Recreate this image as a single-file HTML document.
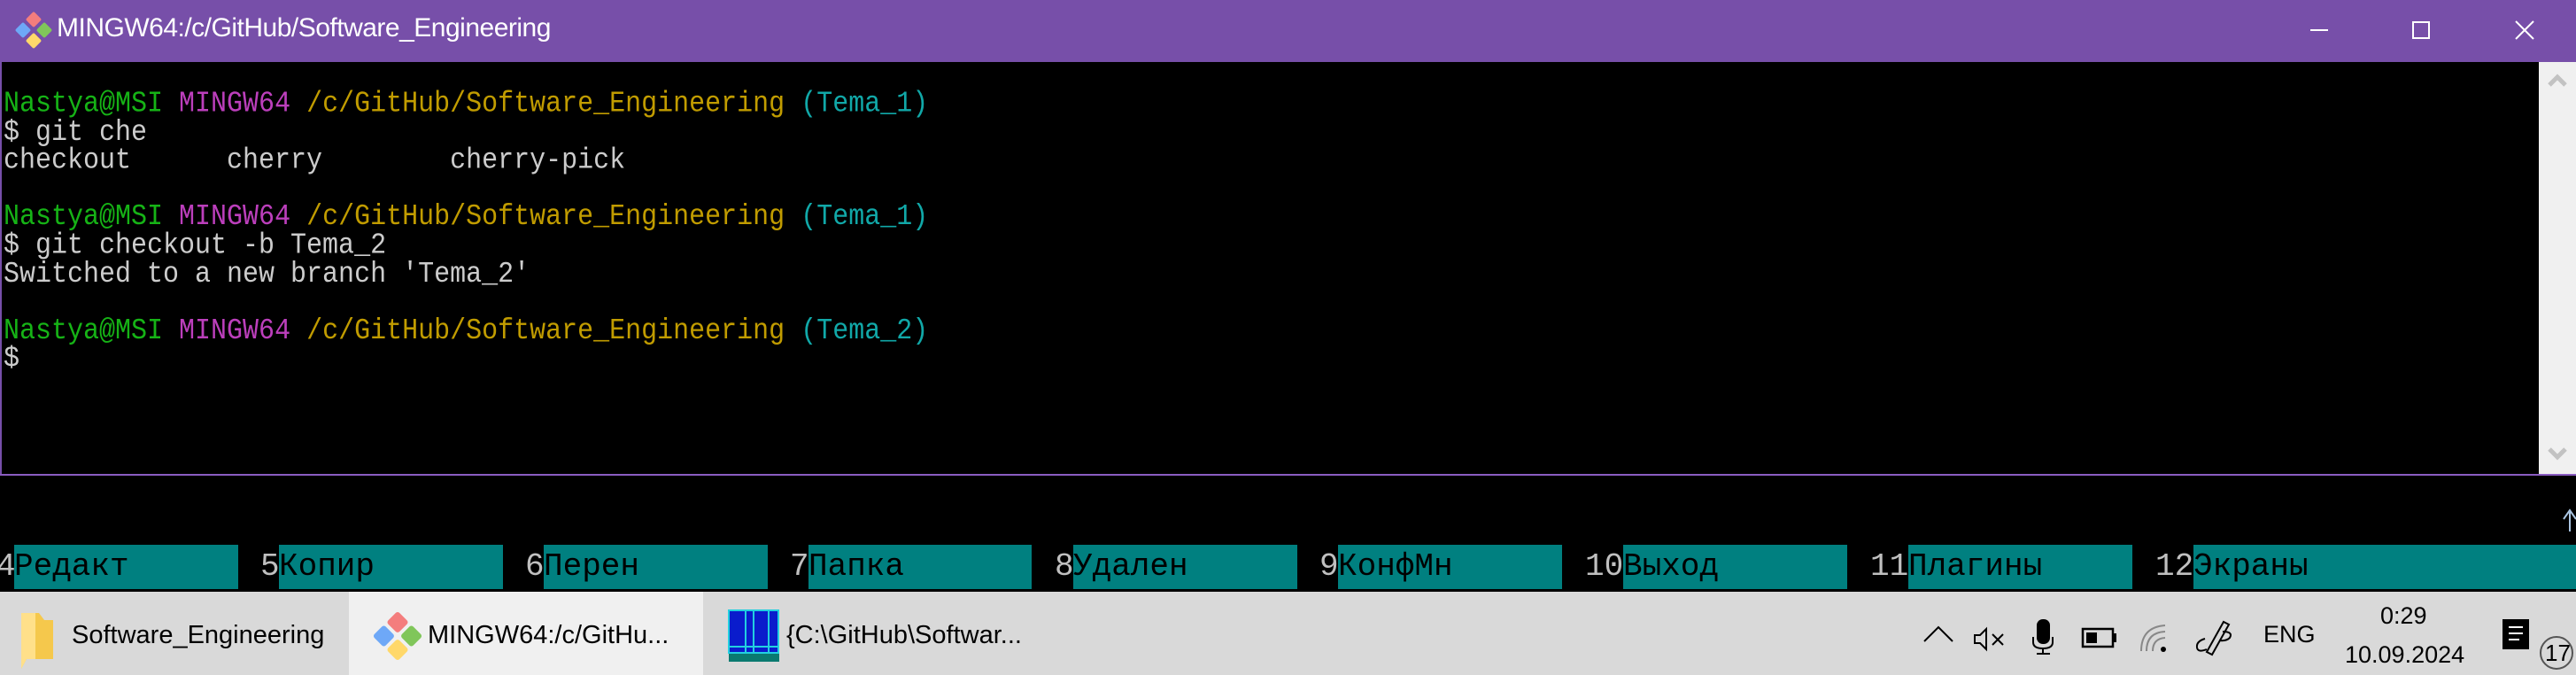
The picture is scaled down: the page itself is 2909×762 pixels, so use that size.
<!DOCTYPE html>
<html><head><meta charset="utf-8"><style>
*{margin:0;padding:0;box-sizing:border-box}
body{width:2909px;height:762px;overflow:hidden;background:#000;position:relative;font-family:"Liberation Sans","DejaVu Sans",sans-serif}
.a{position:absolute;white-space:pre}
#title{left:0;top:0;width:2909px;height:70px;background:#774fa9}
.term{font-family:"Liberation Mono","DejaVu Sans Mono",monospace;font-size:30px;line-height:28.6px;color:#cccccc;transform:scaleY(1.12);transform-origin:0 0}
.g{color:#16b316}.m{color:#bc3fbc}.y{color:#c19c00}.c{color:#11a8a8}
.fk{font-family:"Liberation Mono","DejaVu Sans Mono",monospace;font-size:36px;line-height:50px;top:615px;height:50px}
.num{color:#c0c0c0}
.blk{background:#008080;color:#000;height:50px}
#tb{left:0;top:668px;width:2909px;height:94px;background:#d9d9d9}
.tt{font-size:29px;color:#000;top:701px}
</style></head><body>
<div id="title" class="a"></div>
<div class="a" style="left:0;top:70px;width:2px;height:467px;background:#774fa9"></div>
<div class="a" style="left:0;top:535px;width:2909px;height:2px;background:#8a5cc0"></div>
<svg class="a" style="left:0;top:0" width="2909" height="762">
 <g transform="translate(38,34) rotate(45)">
  <rect x="-15" y="-15" width="13" height="13" rx="2" fill="#f47d7d"/>
  <rect x="2" y="-15" width="13" height="13" rx="2" fill="#80c65a"/>
  <rect x="2" y="2" width="13" height="13" rx="2" fill="#ffd86a"/>
  <rect x="-15" y="2" width="13" height="13" rx="2" fill="#6ea8f7"/>
 </g>
 <line x1="2609" y1="34" x2="2629" y2="34" stroke="#fff" stroke-width="2"/>
 <rect x="2725" y="25" width="18" height="18" fill="none" stroke="#fff" stroke-width="2"/>
 <path d="M2841 24L2861 44M2861 24L2841 44" stroke="#fff" stroke-width="2"/>
 <rect x="2867" y="70" width="42" height="465" fill="#f0f0f0"/>
 <path d="M2879 96L2888 87L2897 96" stroke="#c2c2c2" stroke-width="5" fill="none"/>
 <path d="M2879 507L2888 516L2897 507" stroke="#c2c2c2" stroke-width="5" fill="none"/>
 <path d="M2902 600V578M2895 586L2902 576L2909 586" stroke="#a9c4e0" stroke-width="2" fill="none"/>
</svg>
<div class="a" style="left:64px;top:15px;font-size:30px;color:#fff;letter-spacing:-0.5px">MINGW64:/c/GitHub/Software_Engineering</div>
<div class="a term" style="left:4px;top:102px"><span class="g">Nastya@MSI</span> <span class="m">MINGW64</span> <span class="y">/c/GitHub/Software_Engineering</span> <span class="c">(Tema_1)</span>
$ git che
checkout      cherry        cherry-pick

<span class="g">Nastya@MSI</span> <span class="m">MINGW64</span> <span class="y">/c/GitHub/Software_Engineering</span> <span class="c">(Tema_1)</span>
$ git checkout -b Tema_2
Switched to a new branch 'Tema_2'

<span class="g">Nastya@MSI</span> <span class="m">MINGW64</span> <span class="y">/c/GitHub/Software_Engineering</span> <span class="c">(Tema_2)</span>
$</div>

<div class="a fk num" style="left:-4px">4</div><div class="a fk blk" style="left:16px;width:253px">Редакт</div>
<div class="a fk num" style="left:294px">5</div><div class="a fk blk" style="left:315px;width:253px">Копир</div>
<div class="a fk num" style="left:593px">6</div><div class="a fk blk" style="left:614px;width:253px">Перен</div>
<div class="a fk num" style="left:892px">7</div><div class="a fk blk" style="left:913px;width:252px">Папка</div>
<div class="a fk num" style="left:1191px">8</div><div class="a fk blk" style="left:1212px;width:253px">Удален</div>
<div class="a fk num" style="left:1490px">9</div><div class="a fk blk" style="left:1511px;width:253px">КонфМн</div>
<div class="a fk num" style="left:1790px">10</div><div class="a fk blk" style="left:1833px;width:253px">Выход</div>
<div class="a fk num" style="left:2112px">11</div><div class="a fk blk" style="left:2155px;width:253px">Плагины</div>
<div class="a fk num" style="left:2434px">12</div><div class="a fk blk" style="left:2477px;width:432px">Экраны</div>

<div id="tb" class="a"></div>
<div class="a" style="left:394px;top:668px;width:400px;height:94px;background:#f0f0f0"></div>
<svg class="a" style="left:0;top:0" width="2909" height="762">
 <path d="M24 692H44L50 700H60V744H30L24 755Z" fill="#f5c84c"/>
 <path d="M24 692H40V744H30L24 755Z" fill="#ffe08a"/>
 <g transform="translate(449,718) rotate(45)">
  <rect x="-20" y="-20" width="18" height="18" rx="3" fill="#f47d7d"/>
  <rect x="2" y="-20" width="18" height="18" rx="3" fill="#80c65a"/>
  <rect x="2" y="2" width="18" height="18" rx="3" fill="#ffd86a"/>
  <rect x="-20" y="2" width="18" height="18" rx="3" fill="#6ea8f7"/>
 </g>
 <rect x="823" y="689" width="56" height="48" fill="#0a1ccc" stroke="#22d0e0" stroke-width="2"/>
 <path d="M842 689V737M851 689V737M868 689V737M823 730H879" stroke="#22d0e0" stroke-width="2"/>
 <rect x="823" y="738" width="57" height="9" fill="#0a7a70"/>
 <path d="M2173 724L2189 708L2205 724" stroke="#000" stroke-width="2" fill="none"/>
 <path d="M2230 717H2236L2243 710V733L2236 726H2230Z" stroke="#000" stroke-width="2" fill="none"/>
 <path d="M2250 716L2262 728M2262 716L2250 728" stroke="#000" stroke-width="2"/>
 <rect x="2300" y="699" width="15" height="28" rx="7" fill="#000"/>
 <path d="M2296 719V725Q2296 732 2307 732Q2318 732 2318 725V719M2307 732V738M2300 738H2315" stroke="#000" stroke-width="2" fill="none"/>
 <rect x="2352" y="710" width="34" height="20" fill="none" stroke="#000" stroke-width="2.5"/>
 <rect x="2356" y="714" width="12" height="12" fill="#000"/>
 <rect x="2387" y="715" width="3" height="10" fill="#000"/>
 <path d="M2418 735Q2418 708 2445 706M2424 735Q2424 714 2445 713M2431 735Q2431 721 2445 720" stroke="#888" stroke-width="2" fill="none"/>
 <circle cx="2443" cy="733" r="3" fill="#000"/>
 <path d="M2492 736L2511 702L2517 705L2498 739ZM2510 713Q2522 713 2518 720Q2514 724 2506 723M2490 721Q2480 724 2481 731Q2482 737 2492 733" stroke="#000" stroke-width="2" fill="none"/>
 <rect x="2826" y="699" width="30" height="34" fill="#000"/>
 <path d="M2833 708H2849M2833 715H2849M2833 722H2845" stroke="#fff" stroke-width="2"/>
 <circle cx="2887" cy="737" r="18" fill="#d9d9d9" stroke="#555" stroke-width="2"/>
</svg>
<div class="a tt" style="left:81px">Software_Engineering</div>
<div class="a tt" style="left:483px">MINGW64:/c/GitHu...</div>
<div class="a tt" style="left:888px">{C:\GitHub\Softwar...</div>
<div class="a" style="left:2556px;top:701px;font-size:27px;color:#000">ENG</div>
<div class="a" style="left:2688px;top:680px;font-size:27px;color:#000">0:29</div>
<div class="a" style="left:2648px;top:724px;font-size:27px;color:#000">10.09.2024</div>
<div class="a" style="left:2874px;top:722px;font-size:26px;color:#000">17</div>
</body></html>
